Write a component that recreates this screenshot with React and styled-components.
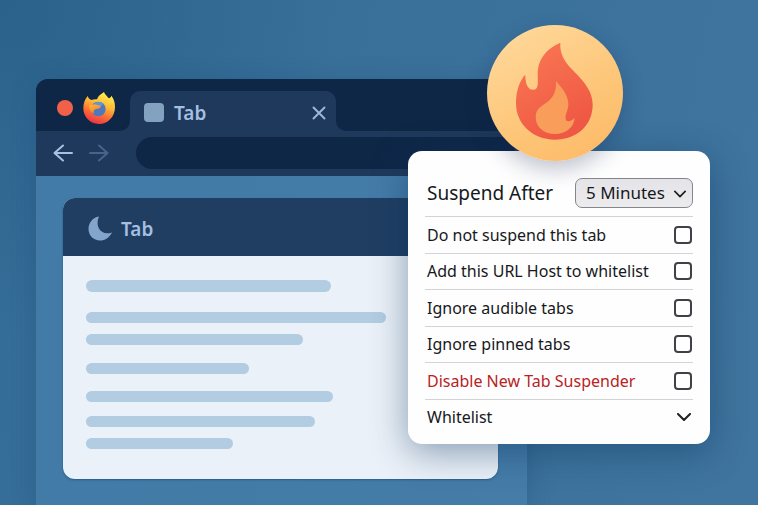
import React, { useState } from "react";
import styled, { createGlobalStyle } from "styled-components";

const GlobalStyle = createGlobalStyle`
    * {
        box-sizing: border-box;
    }

    body {
        margin: 0;
        font-family: "Noto Sans", "Open Sans", sans-serif;
    }
`;

const Page = styled.main`
    position: relative;
    min-height: 100vh;
    padding: 79px 231px 0 36px;
    overflow: hidden;
    background: radial-gradient(circle at 0 0, #2b628c 0, rgba(43, 98, 140, 0) 340px),
        linear-gradient(100deg, #346d97 0%, #3a719b 55%, #40759f 100%);
`;

// --- Browser window ---

const Browser = styled.section`
    display: flex;
    flex-direction: column;
    min-height: calc(100vh - 79px);
    border-radius: 12px 12px 0 0;
    overflow: hidden;
    background: linear-gradient(90deg, #427ba7, #457ca8);
    box-shadow: 0 4px 24px rgba(20, 60, 100, 0.25);
`;

const TabStrip = styled.div`
    display: flex;
    height: 52px;
    background: #1e395b;
`;

const WindowControls = styled.div`
    display: flex;
    align-items: center;
    gap: 10px;
    width: 94px;
    padding: 6px 0 0 21px;
    border-radius: 0 0 10px 0;
    background: #0e2746;
`;

const CloseDot = styled.button`
    width: 16px;
    height: 16px;
    padding: 0;
    border: 0;
    border-radius: 50%;
    background: #f1614a;
`;

const TabCell = styled.div`
    display: flex;
    width: 206px;
    padding-top: 12px;
    background: #0e2746;
`;

const BrowserTab = styled.div`
    display: flex;
    flex: 1;
    align-items: center;
    gap: 10px;
    padding: 3px 10px 0 14px;
    border-radius: 10px 10px 0 0;
    background: #1e395b;
`;

const StripRest = styled.div`
    flex: 1;
    border-radius: 0 0 0 10px;
    background: #0e2746;
`;

const Favicon = styled.span`
    width: 20px;
    height: 19px;
    border-radius: 4px;
    background: #83a2c2;
`;

const TabTitle = styled.span`
    flex: 1;
    font-size: 19px;
    font-weight: 600;
    line-height: 24px;
    color: #a4bfe0;
`;

const IconButton = styled.button`
    display: flex;
    padding: 0;
    border: 0;
    background: none;
    color: ${(props) => props.$color};
`;

const Toolbar = styled.div`
    display: flex;
    align-items: center;
    gap: 16px;
    height: 45px;
    padding: 0 12px 1px 17px;
    background: #1e395b;
`;

const Address = styled.input`
    flex: 1;
    min-width: 0;
    height: 32px;
    margin-left: 11px;
    padding: 0 16px;
    border: 0;
    border-radius: 16px;
    background: #0f2747;
    color: #a7c2e2;
    font: inherit;
`;

const Viewport = styled.div`
    padding: 22px 29px 26px 27px;
`;

const Card = styled.article`
    border-radius: 12px;
    overflow: hidden;
    background: #ebf1f8;
    box-shadow: 0 1px 2px rgba(20, 70, 115, 0.6);
`;

const CardHeader = styled.header`
    display: flex;
    align-items: center;
    gap: 9px;
    height: 58px;
    padding: 3px 25px 0;
    background: #1f3e62;
`;

const CardBody = styled.div`
    padding: 24px 23px 30px;
`;

const TextBar = styled.div`
    width: ${(props) => props.$width}px;
    max-width: 100%;
    height: ${(props) => props.$height || 11}px;
    margin-bottom: ${(props) => props.$gap}px;
    border-radius: 6px;
    background: #b2cde1;
`;

// --- Extension popup ---

const Popup = styled.form`
    position: absolute;
    top: 151px;
    right: 48px;
    width: 302px;
    padding: 26px 17px 9px;
    border-radius: 14px;
    background: #fefefe;
    box-shadow: 0 8px 36px rgba(10, 50, 90, 0.45);
`;

const Badge = styled.div`
    position: absolute;
    top: -126px;
    left: 79px;
    width: 136px;
    height: 136px;
    border-radius: 50%;
    background: linear-gradient(150deg, #ffdba0, #fdc577 60%, #fdb866);
    box-shadow: 0 8px 22px rgba(20, 35, 80, 0.28);
`;

const PopupHeader = styled.div`
    position: relative;
    display: flex;
    align-items: center;
    justify-content: space-between;
    height: 39px;
    padding: 0 0 8px 2px;
`;

const HeaderLabel = styled.label`
    font-size: 19px;
    line-height: 30px;
    color: #17181c;
`;

const SelectBox = styled.div`
    position: relative;
    width: 118px;

    svg {
        position: absolute;
        top: 12px;
        right: 7px;
        pointer-events: none;
    }
`;

const Select = styled.select`
    appearance: none;
    display: block;
    width: 100%;
    height: 30px;
    padding: 0 0 0 10px;
    border: 1px solid #85868c;
    border-radius: 7px;
    background: linear-gradient(#e4e4e8, #ececef);
    color: #17181c;
    font-family: inherit;
    font-size: 17px;
`;

const Options = styled.div`
    display: grid;
    grid-auto-rows: 1fr;
    height: 219px;
`;

const Option = styled.label`
    display: flex;
    align-items: center;
    justify-content: space-between;
    padding: 0 1px 0 2px;
    border-top: 1px solid #d3d3d6;
    font-size: 16px;
    color: ${(props) => (props.$danger ? "#b8231f" : "#17181c")};
`;

const Checkbox = styled.input`
    appearance: none;
    width: 18px;
    height: 18px;
    margin: 0;
    border: 2px solid #404146;
    border-radius: 4px;
    background: #fff;

    &:checked {
        background: #404146;
    }
`;

const WhitelistButton = styled.button`
    display: flex;
    align-items: center;
    justify-content: space-between;
    padding: 0 2px;
    border: 0;
    border-top: 1px solid #d3d3d6;
    background: none;
    color: #17181c;
    font-family: inherit;
    font-size: 16px;
`;

const bars = [
    { width: 245, height: 12, gap: 20 },
    { width: 300, gap: 11 },
    { width: 217, gap: 18 },
    { width: 163, gap: 17 },
    { width: 247, gap: 14 },
    { width: 229, gap: 11 },
    { width: 147, gap: 0 },
];

const options = [
    { id: "tab", label: "Do not suspend this tab" },
    { id: "host", label: "Add this URL Host to whitelist" },
    { id: "audible", label: "Ignore audible tabs" },
    { id: "pinned", label: "Ignore pinned tabs" },
    { id: "disable", label: "Disable New Tab Suspender", danger: true },
];

function FirefoxIcon() {
    return (
        <svg width="32" height="34" viewBox="160 68 96 102" aria-hidden="true">
            <defs>
                <linearGradient id="fox" x1="0.8" y1="0" x2="0.4" y2="1">
                    <stop offset="0.1" stopColor="#ffe94a" />
                    <stop offset="0.42" stopColor="#ffb938" />
                    <stop offset="0.7" stopColor="#fb7033" />
                    <stop offset="1" stopColor="#ee3348" />
                </linearGradient>
                <linearGradient id="foxHead" x1="0" y1="0" x2="0.6" y2="1">
                    <stop offset="0" stopColor="#ffb636" />
                    <stop offset="1" stopColor="#fb7f30" />
                </linearGradient>
            </defs>
            <path
                d="M223 71c3 9 11 13 14 19 4-1 7-4 8-8 8 10 11 20 11 34 0 29-21 51-48 51s-47-21-47-47c0-14 4-27 13-37 2 6 5 9 11 12 6-2 11-3 17-2 3-10 11-15 21-22z"
                fill="url(#fox)"
            />
            <circle cx="206" cy="122" r="22" fill="#4f78bf" />
            <path d="M190 108c7-8 22-11 32-1-5 3-7 7-13 8-7 0-14-2-19-7z" fill="#5b9ad0" />
            <path d="M179 111c10-4 22-3 35 2-1 6-8 9-14 9-7 1-10 6-7 14-9-4-15-14-14-25z" fill="url(#foxHead)" />
        </svg>
    );
}

function FlameIcon() {
    return (
        <svg width="136" height="136" viewBox="21 30 408 408" aria-hidden="true">
            <defs>
                <linearGradient id="flame" x1="0" y1="0" x2="0.5" y2="1">
                    <stop offset="0" stopColor="#fa7a54" />
                    <stop offset="1" stopColor="#ef5844" />
                </linearGradient>
            </defs>
            <path
                d="M241 83C239 113 251 137 275 162C303 191 338 223 338 269C338 332 289 374 224 374C157 374 108 326 108 265C108 228 119 196 136 179C136 200 140 224 160 224C175 224 174 207 173 182C172 132 199 102 241 83Z"
                fill="url(#flame)"
            />
            <path
                d="M228 198C246 219 267 243 265 271C264 286 255 299 257 312C259 323 274 319 284 309C282 337 257 357 225 357C190 357 167 335 167 306C167 277 191 272 209 255C225 240 229 220 228 198Z"
                fill="#f99d5b"
            />
        </svg>
    );
}

function Chevron({ width, height, strokeWidth }) {
    return (
        <svg width={width} height={height} viewBox="0 0 14 8" fill="none" stroke="#202126" strokeWidth={strokeWidth} strokeLinecap="round" strokeLinejoin="round" aria-hidden="true">
            <path d="M1 1l6 6 6-6" />
        </svg>
    );
}

function Arrow({ forward }) {
    return (
        <svg width="20" height="18" viewBox="0 0 20 18" fill="none" stroke="currentColor" strokeWidth="2" strokeLinecap="round" strokeLinejoin="round" aria-hidden="true">
            <path d={forward ? "M10 1.5l8.5 7.5-8.5 7.5M18.5 9H1" : "M10 1.5L1.5 9l8.5 7.5M1.5 9H19"} />
        </svg>
    );
}

export default function App() {
    const [delay, setDelay] = useState("5");
    const [checked, setChecked] = useState({});

    const toggle = (id) => setChecked({ ...checked, [id]: !checked[id] });

    return (
        <Page>
            <GlobalStyle />
            <Browser>
                <TabStrip>
                    <WindowControls>
                        <CloseDot type="button" aria-label="Close window" />
                        <FirefoxIcon />
                    </WindowControls>
                    <TabCell>
                        <BrowserTab>
                            <Favicon />
                            <TabTitle>Tab</TabTitle>
                            <IconButton type="button" aria-label="Close tab" $color="#9db7d8">
                                <svg width="14" height="14" viewBox="0 0 14 14" fill="none" stroke="currentColor" strokeWidth="2" strokeLinecap="round">
                                    <path d="M1.5 1.5l11 11M12.5 1.5l-11 11" />
                                </svg>
                            </IconButton>
                        </BrowserTab>
                    </TabCell>
                    <StripRest />
                </TabStrip>
                <Toolbar>
                    <IconButton type="button" aria-label="Back" $color="#a5c2e2">
                        <Arrow />
                    </IconButton>
                    <IconButton type="button" aria-label="Forward" $color="#46648a">
                        <Arrow forward />
                    </IconButton>
                    <Address type="text" aria-label="Address" />
                </Toolbar>
                <Viewport>
                    <Card>
                        <CardHeader>
                            <svg width="24" height="25" viewBox="0 0 24 25" aria-hidden="true">
                                <path d="M11 0.5C6.5 10 13 20.500 24 16.500C21 22 17 24.500 12 24.500C5.500 24.500 0.500 19.500 0.500 13C0.500 7 4.500 1.500 11 0.500Z" fill="#84a5cb" />
                            </svg>
                            <TabTitle>Tab</TabTitle>
                        </CardHeader>
                        <CardBody>
                            {bars.map((bar, index) => (
                                <TextBar key={index} $width={bar.width} $height={bar.height} $gap={bar.gap} />
                            ))}
                        </CardBody>
                    </Card>
                </Viewport>
            </Browser>

            <Popup>
                <Badge>
                    <FlameIcon />
                </Badge>
                <PopupHeader>
                    <HeaderLabel htmlFor="delay">Suspend After</HeaderLabel>
                    <SelectBox>
                        <Select id="delay" value={delay} onChange={(e) => setDelay(e.target.value)}>
                            <option value="5">5 Minutes</option>
                        </Select>
                        <Chevron width={12} height={8} strokeWidth={2} />
                    </SelectBox>
                </PopupHeader>
                <Options>
                    {options.map((option) => (
                        <Option key={option.id} htmlFor={option.id} $danger={option.danger}>
                            {option.label}
                            <Checkbox
                                type="checkbox"
                                id={option.id}
                                checked={!!checked[option.id]}
                                onChange={() => toggle(option.id)}
                            />
                        </Option>
                    ))}
                    <WhitelistButton type="button">
                        Whitelist
                        <Chevron width={14} height={8} strokeWidth={2} />
                    </WhitelistButton>
                </Options>
            </Popup>
        </Page>
    );
}
